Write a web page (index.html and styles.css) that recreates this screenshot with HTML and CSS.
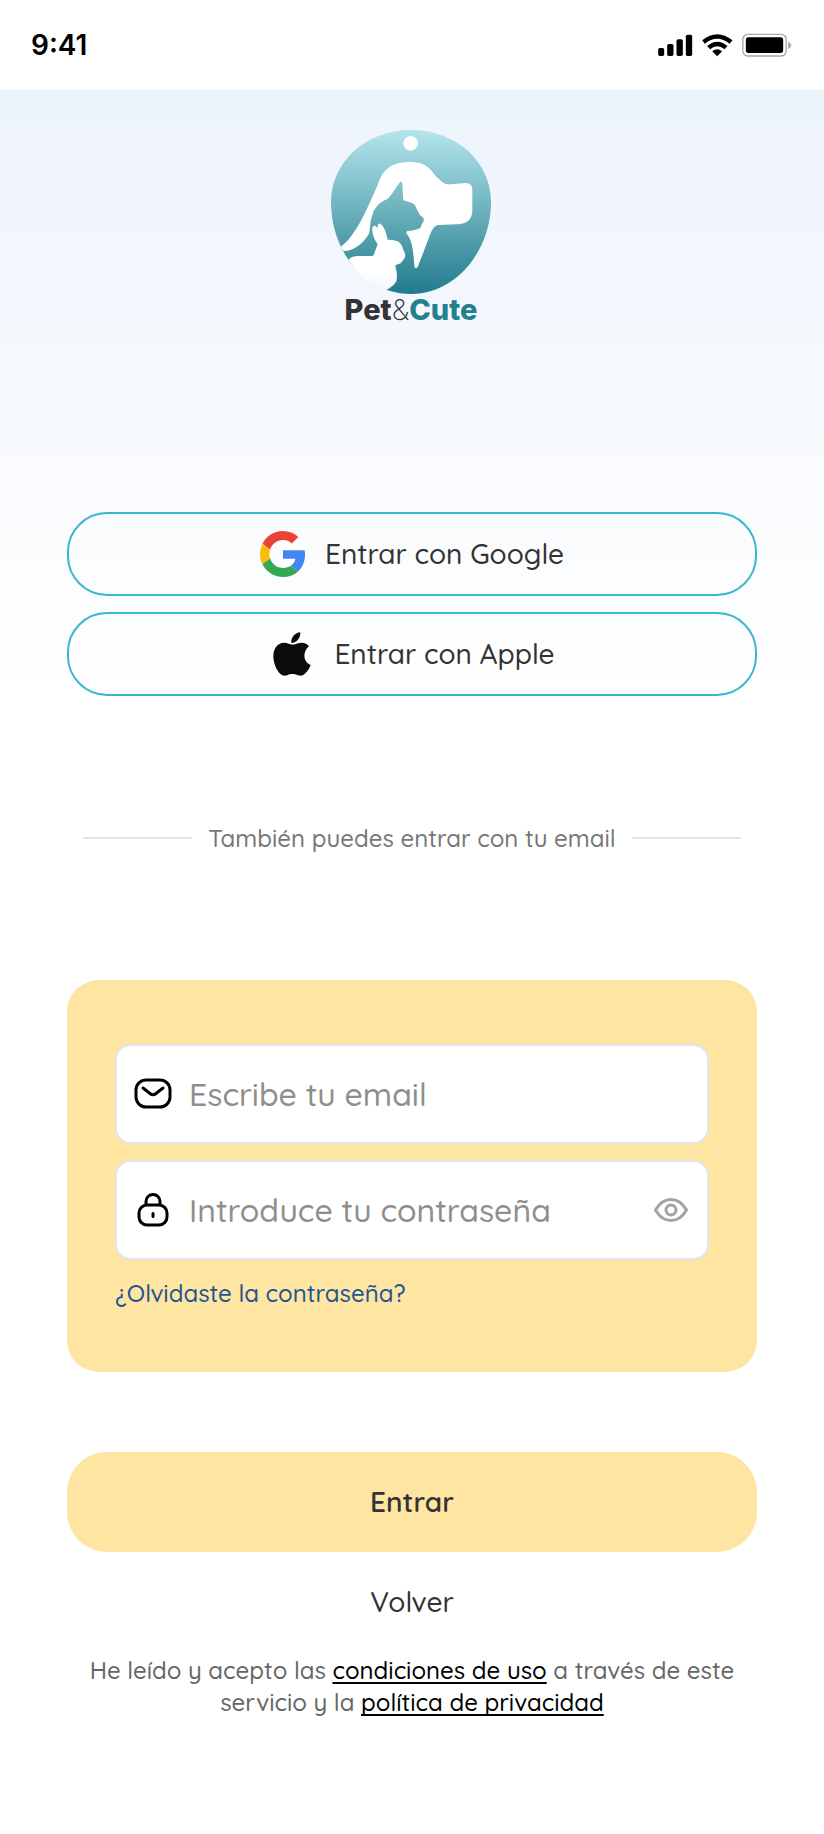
FILE: index.html
```html
<!DOCTYPE html>
<html lang="es">
<head>
<meta charset="utf-8">
<meta name="viewport" content="width=device-width, initial-scale=1">
<title>Pet&amp;Cute</title>
<link rel="stylesheet" href="styles.css">
</head>
<body>
<header class="status">
  <time class="status-time">9:41</time>
  <svg class="status-icons" viewBox="54 38 404 72" aria-hidden="true">
    <rect x="57" y="83" width="18" height="24" rx="5"/>
    <rect x="84" y="71" width="19" height="36" rx="5"/>
    <rect x="112" y="57" width="19" height="50" rx="5"/>
    <rect x="140" y="43" width="19" height="64" rx="5"/>
    <path d="M189 60Q234 23 280 60L271 70Q234 40 197 70Z"/>
    <path d="M204 77Q234 51 265 77L256 87Q234 69 213 87Z"/>
    <path d="M219 93Q234 81 249 93L234 108Z"/>
    <rect x="311" y="42" width="130" height="65" rx="15" fill="none" stroke="#a6a6a6" stroke-width="4"/>
    <rect x="320" y="51" width="112" height="47" rx="8"/>
    <path d="M447 64Q456 68 456 75T447 87Z" fill="#a6a6a6"/>
  </svg>
</header>
<main class="screen">
  <h1 class="brand">
    <svg class="brand-mark" viewBox="60 57 486 498" aria-hidden="true">
      <defs>
        <linearGradient id="tag" x1="0" y1="0" x2="0" y2="1">
          <stop offset="0" stop-color="#b4e5ec"/>
          <stop offset="1" stop-color="#217b8d"/>
        </linearGradient>
        <linearGradient id="rabbit" x1="0" y1="0" x2="0" y2="1">
          <stop offset="0.7" stop-color="#fff"/>
          <stop offset="1" stop-color="#f2f6fb"/>
        </linearGradient>
      </defs>
      <path fill="url(#tag)" d="M303 60C440 60 543 157 543 276C543 420 440 552 303 552C160 552 63 420 63 276C63 157 166 60 303 60Z"/>
      <circle cx="302" cy="100" r="22" fill="#fff"/>
      <path fill="#fff" d="M93 409C138 380 178 282 204 222C216 181 245 156 296 156C360 156 362 185 384 205C401 221 407 224 421 223L466 219C480 219 487 227 487 238V307C483 334 466 342 441 343L386 345C373 347 367 357 361 372L324 469Q322 475 317 474Q313 474 313 469C310 420 306 390 290 371Q286 362 296 362C316 362 334 355 334 347C334 342 338 340 341 333Q343 327 338 322C326 315 326 305 319 295C315 279 303 278 291 274Q279 273 279 263L277 218Q273 212 268 219C253 239 242 260 231 268C212 274 194 293 189 310C180 332 181 350 178 369C163 397 136 419 112 422L100 423Z"/>
      <path fill="url(#rabbit)" d="M116 449Q123 438 145 438H185Q193 437 194 427L203 403C190 386 184 363 188 352Q192 343 199 351L203 354C202 345 205 340 211 341C221 347 229 367 233 389C250 390 267 390 275 406C279 418 282 422 286 434C286 447 277 451 272 460L256 466C258 480 263 493 260 508C260 520 245 531 230 540C183 531 144 495 116 449Z"/>
    </svg>
    <span class="wordmark"><b class="word-dark">Pet</b><span class="word-and">&amp;</span><b class="word-teal">Cute</b></span>
  </h1>

  <div class="social">
    <button class="pill" type="button">
      <svg class="pill-icon" viewBox="0 0 48 48" aria-hidden="true">
        <path fill="#fff" d="M24 8h22v16c0 10-9 17-22 17z"/>
        <path fill="#ea4335" d="M24 9.5c3.54 0 6.71 1.22 9.21 3.6l6.85-6.85C35.9 2.38 30.47 0 24 0 14.62 0 6.51 5.38 2.56 13.22l7.98 6.19C12.43 13.72 17.74 9.5 24 9.5z"/>
        <path fill="#4285f4" d="M46.98 24.55c0-1.57-.15-3.09-.38-4.55H24v9.02h12.94c-.58 2.96-2.26 5.48-4.78 7.18l7.73 6c4.51-4.18 7.09-10.36 7.09-17.65z"/>
        <path fill="#fbbc05" d="M10.53 28.59c-.48-1.45-.76-2.99-.76-4.59s.27-3.14.76-4.59l-7.98-6.19C.92 16.46 0 20.12 0 24c0 3.88.92 7.54 2.56 10.78l7.97-6.19z"/>
        <path fill="#34a853" d="M24 48c6.48 0 11.93-2.13 15.89-5.81l-7.73-6c-2.15 1.45-4.92 2.3-8.16 2.3-6.26 0-11.57-4.22-13.47-9.91l-7.98 6.19C6.51 42.62 14.62 48 24 48z"/>
      </svg>
      Entrar con Google
    </button>
    <button class="pill" type="button">
      <svg class="pill-icon" viewBox="630 391 138 138" aria-hidden="true">
        <path fill="#0b0b0a" d="M701 432C712 430 718 426 730 426C740 426 747 433 750 437C733 450 729 482 755 493C750 507 737 525 725 525C715 525 712 520 700 520C688 520 686 525 676 525C660 525 643 493 643 466C643 441 658 426 675 426C686 426 692 431 701 432ZM697 427C695 410 709 396 724 395C725 411 714 427 697 427Z"/>
      </svg>
      Entrar con Apple
    </button>
  </div>

  <p class="divider">También puedes entrar con tu email</p>

  <form class="login" id="login">
    <div class="field">
      <label class="field-label" for="email" aria-label="Email">
        <svg class="field-icon" viewBox="0 0 40 40" fill="none" stroke="#000" stroke-width="3" stroke-linecap="round" stroke-linejoin="round" aria-hidden="true">
          <rect x="3" y="6" width="34" height="27" rx="10"/>
          <path d="M10 14L17 19.500Q20 22 23 19.500L30 14"/>
        </svg>
      </label>
      <input class="field-input" id="email" type="email" placeholder="Escribe tu email">
    </div>
    <div class="field">
      <label class="field-label" for="password" aria-label="Contraseña">
        <svg class="field-icon" viewBox="0 0 40 40" fill="none" stroke="#000" stroke-width="3" stroke-linecap="round" aria-hidden="true">
          <rect x="6" y="15" width="28" height="20" rx="8"/>
          <path d="M13 14V11.500a7 7 0 0 1 14 0V14M20 23.500V26.500"/>
        </svg>
      </label>
      <input class="field-input" id="password" type="password" placeholder="Introduce tu contraseña">
      <button class="reveal" type="button" aria-label="Mostrar contraseña">
        <svg class="reveal-icon" viewBox="0 0 36 36" fill="none" stroke="#a3a3a3" stroke-width="3" aria-hidden="true">
          <path d="M2.500 18C6.500 11 12 7.500 18 7.500S29.500 11 33.500 18C29.500 25 24 28.500 18 28.500S6.500 25 2.500 18Z" stroke-linejoin="round"/>
          <circle cx="18" cy="18" r="5"/>
        </svg>
      </button>
    </div>
    <a class="forgot" href="#">¿Olvidaste la contraseña?</a>
  </form>

  <button class="submit" type="submit" form="login">Entrar</button>
  <button class="back" type="button">Volver</button>
  <p class="terms">He leído y acepto las <a class="terms-link" href="#">condiciones de uso</a> a través de este servicio y la <a class="terms-link" href="#">política de privacidad</a></p>
</main>
</body>
</html>
```
FILE: styles.css
```css
* {
  box-sizing: border-box;
}

body {
  margin: 0;
  background: #fff;
  color: #333;
  font-family: Quicksand, "Open Sans", sans-serif;
  font-size: 28px;
  font-weight: 500;
}

button,
input {
  font: inherit;
  color: inherit;
}

button {
  cursor: pointer;
}

.status {
  display: flex;
  align-items: center;
  justify-content: space-between;
  height: 90px;
  padding: 0 32px 0 31px;
}

.status-time {
  color: #000;
  font-family: Inter, sans-serif;
  font-weight: 600;
}

.status-icons {
  width: 135px;
  height: 24px;
}

.screen {
  display: flex;
  flex-direction: column;
  padding: 39px 67px 110px;
  background: linear-gradient(#edf3fc, #fff 600px);
}

.brand {
  display: flex;
  flex-direction: column;
  align-items: center;
  margin: 0 0 187px;
  padding-right: 2px;
  font-weight: 400;
}

.brand-mark {
  width: 162px;
  height: 166px;
}

.wordmark {
  color: #333;
  font-family: Inter, sans-serif;
  font-size: 29px;
  line-height: 30px;
}

.word-dark {
  font-weight: 800;
}

.word-and {
  font-weight: 200;
}

.word-teal {
  color: #22808f;
  font-weight: 800;
}

.social {
  display: flex;
  flex-direction: column;
  gap: 16px;
}

.pill {
  display: flex;
  align-items: center;
  justify-content: center;
  gap: 19px;
  height: 84px;
  padding: 0 0 1px;
  border: 2px solid #39b7cf;
  border-radius: 40px;
  background: transparent;
}

.pill-icon {
  width: 46px;
  height: 46px;
}

.divider {
  display: flex;
  align-items: center;
  gap: 16px;
  margin: 124px 16px;
  color: #777;
  font-size: 24px;
  line-height: 36px;
  white-space: nowrap;
}

.divider::before,
.divider::after {
  flex: 1;
  height: 2px;
  background: #e5e5e5;
  content: "";
}

.login {
  display: flex;
  flex-direction: column;
  gap: 16px;
  padding: 64px 48px 62px;
  border-radius: 32px;
  background: #ffe5a2;
}

.field {
  display: flex;
  align-items: center;
  gap: 16px;
  height: 100px;
  padding: 0 18px 0 16px;
  border: 2px solid #e1e7f0;
  border-radius: 16px;
  background: #fff;
}

.field-label,
.field-icon,
.reveal-icon {
  display: block;
}

.field-icon {
  width: 40px;
  height: 40px;
}

.field-input {
  flex: 1;
  min-width: 0;
  padding: 0;
  border: 0;
  outline: 0;
  background: transparent;
  font-size: 32px;
}

.field-input::placeholder {
  color: #8e8e8e;
  opacity: 1;
}

.reveal {
  padding: 0;
  border: 0;
  background: none;
}

.reveal-icon {
  width: 36px;
  height: 36px;
}

.forgot {
  align-self: flex-start;
  color: #225591;
  font-size: 24px;
  line-height: 34px;
  text-decoration: none;
}

.submit,
.back {
  height: 100px;
  padding: 0 0 2px;
  border: 0;
}

.submit {
  margin-top: 80px;
  border-radius: 40px;
  background: #ffe5a2;
  font-weight: 600;
}

.back {
  background: none;
}

.terms {
  margin: 2px 0 0;
  color: #666;
  font-size: 24px;
  line-height: 32px;
  text-align: center;
}

.terms-link {
  color: #000;
  text-decoration-skip-ink: none;
  text-decoration-thickness: 2px;
  text-underline-offset: 3px;
}
```
